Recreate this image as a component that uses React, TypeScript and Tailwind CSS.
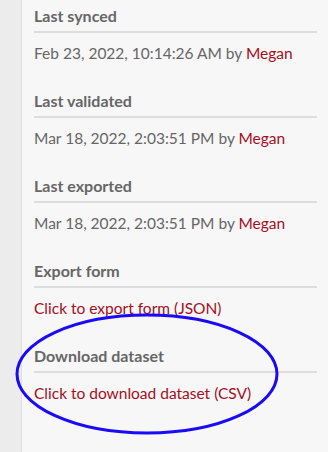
import React from "react";

const sections = [
  { title: "Last synced", text: "Feb 23, 2022, 10:14:26 AM by ", user: "Megan" },
  { title: "Last validated", text: "Mar 18, 2022, 2:03:51 PM by ", user: "Megan" },
  { title: "Last exported", text: "Mar 18, 2022, 2:03:51 PM by ", user: "Megan" },
  { title: "Export form", link: "Click to export form (JSON)" },
  { title: "Download dataset", link: "Click to download dataset (CSV)" },
];

export default function App() {
  return (
    <div
      className="relative flex w-[328px] h-[452px] overflow-hidden"
      style={{ fontFamily: "Lato, 'Open Sans', sans-serif" }}
    >
      <div className="w-[22px] shrink-0 bg-[#ececec] border-r border-[#e0e0e0]" />
      <div className="flex-1 bg-[#f7f7f7] pl-3 pr-[11px] pt-[6px]">
        {sections.map((s) => (
          <div key={s.title} className="mb-[28px]">
            <div className="text-[16px] leading-[20px] font-bold text-[#666666] pb-[5px] border-b-2 border-[#dddddd]">
              {s.title}
            </div>
            <div className="mt-[10px] text-[15.5px] leading-[20px] text-[#666666]">
              {s.link ? (
                <span className="text-[#a50e22]">{s.link}</span>
              ) : (
                <>
                  {s.text}
                  <span className="text-[#a50e22]">{s.user}</span>
                </>
              )}
            </div>
          </div>
        ))}
      </div>
      <svg
        className="absolute left-0 top-0 pointer-events-none"
        width="328"
        height="452"
        viewBox="0 0 328 452"
      >
        <ellipse cx="147" cy="374" rx="130" ry="59" fill="none" stroke="#1a0af5" strokeWidth="3" />
      </svg>
    </div>
  );
}
